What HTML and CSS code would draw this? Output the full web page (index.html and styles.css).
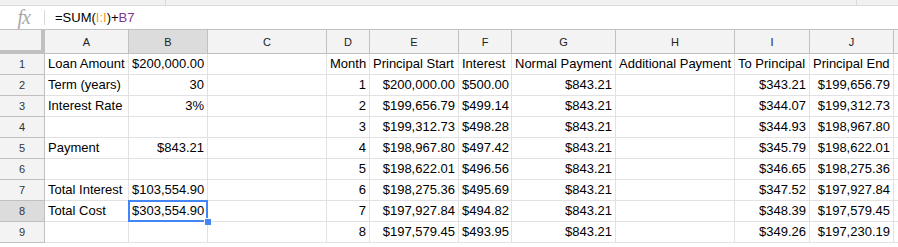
FILE: index.html
```html
<!DOCTYPE html>
<html lang="en">
<head>
 <meta charset="UTF-8">
 <meta name="viewport" content="width=device-width, initial-scale=1">
 <title>Mortgage Sheet</title>
 <link rel="stylesheet" href="styles.css">
</head>
<body>
 <div class="toolbar-edge">
  <span class="edge-part edge-left"></span>
  <span class="edge-part edge-mid"></span>
  <span class="edge-part"></span>
 </div>

 <div class="formula-bar">
  <div class="fx-box">
   <span class="fx">fx</span>
   <span class="fx-divider"></span>
  </div>
  <div class="formula">=SUM(<span class="ref-range">I:I</span>)+<span class="ref-cell">B7</span></div>
 </div>

 <table class="sheet">
  <colgroup>
   <col style="width: 45px">
   <col style="width: 84px">
   <col style="width: 79px">
   <col style="width: 119px">
   <col style="width: 43px">
   <col style="width: 89px">
   <col style="width: 53px">
   <col style="width: 104px">
   <col style="width: 119px">
   <col style="width: 75px">
   <col style="width: 84px">
   <col style="width: 4px">
  </colgroup>
  <thead>
   <tr>
    <th class="corner"></th>
    <th>A</th>
    <th class="active">B</th>
    <th>C</th>
    <th>D</th>
    <th>E</th>
    <th>F</th>
    <th>G</th>
    <th>H</th>
    <th>I</th>
    <th>J</th>
    <th class="edge"></th>
   </tr>
  </thead>
  <tbody id="sheetBody"></tbody>
 </table>

 <script>
  // Rows of the sheet: columns A to J, empty string for a blank cell
  const rows = [
   ['Loan Amount', '$200,000.00', '', 'Month', 'Principal Start', 'Interest', 'Normal Payment', 'Additional Payment', 'To Principal', 'Principal End'],
   ['Term (years)', '30', '', '1', '$200,000.00', '$500.00', '$843.21', '', '$343.21', '$199,656.79'],
   ['Interest Rate', '3%', '', '2', '$199,656.79', '$499.14', '$843.21', '', '$344.07', '$199,312.73'],
   ['', '', '', '3', '$199,312.73', '$498.28', '$843.21', '', '$344.93', '$198,967.80'],
   ['Payment', '$843.21', '', '4', '$198,967.80', '$497.42', '$843.21', '', '$345.79', '$198,622.01'],
   ['', '', '', '5', '$198,622.01', '$496.56', '$843.21', '', '$346.65', '$198,275.36'],
   ['Total Interest', '$103,554.90', '', '6', '$198,275.36', '$495.69', '$843.21', '', '$347.52', '$197,927.84'],
   ['Total Cost', '$303,554.90', '', '7', '$197,927.84', '$494.82', '$843.21', '', '$348.39', '$197,579.45'],
   ['', '', '', '8', '$197,579.45', '$493.95', '$843.21', '', '$349.26', '$197,230.19']
  ];

  const selectedRow = 7; // row 8
  const selectedCol = 1; // column B

  const body = document.getElementById('sheetBody');

  rows.forEach((row, r) => {
   const tr = document.createElement('tr');

   const rowHead = document.createElement('th');
   rowHead.className = 'row-head' + (r === selectedRow ? ' active' : '');
   rowHead.textContent = r + 1;
   tr.appendChild(rowHead);

   row.concat(['']).forEach((value, c) => {
    const td = document.createElement('td');
    td.textContent = value;
    // numbers and money go right, words stay left
    if (/^[\$\d]/.test(value)) td.className = 'num';
    if (r === selectedRow && c === selectedCol) td.classList.add('selected');
    tr.appendChild(td);
   });

   body.appendChild(tr);
  });
 </script>
</body>
</html>
```

FILE: styles.css
```css
:root {
 --header-bg: #f3f3f3;
 --header-active: #dcdcdc;
 --header-line: #c0c0c0;
 --grid-line: #e2e2e2;
 --select-blue: #4285f4;
 --text-color: #000000;
}

html,
body {
 margin: 0;
 padding: 0;
 overflow: hidden;
 background: #ffffff;
}

body {
 font-family: "Liberation Sans", Arial, sans-serif;
 font-size: 13px;
 color: var(--text-color);
 width: 898px;
 height: 247px;
}

/* Bottom edge of the toolbar above the formula bar */
.toolbar-edge {
 display: flex;
 height: 5px;
 background: #f1f1f1;
 border-bottom: 1px solid #dadada;
}

.edge-part {
 flex: 1;
}

.edge-left {
 flex: 0 0 165px;
 border-right: 1px solid #dadada;
}

.edge-mid {
 flex: 0 0 690px;
 border-right: 1px solid #dadada;
}

/* --- Formula bar --- */
.formula-bar {
 display: flex;
 align-items: center;
 height: 23px;
 border-bottom: 1px solid var(--header-line);
}

.fx-box {
 display: flex;
 align-items: center;
 justify-content: flex-end;
 width: 45px;
 height: 100%;
}

.fx {
 font-family: "Liberation Serif", "Times New Roman", serif;
 font-style: italic;
 font-size: 20px;
 color: #a8a8a8;
 margin-right: 14px;
 letter-spacing: -1px;
}

.fx-divider {
 width: 1px;
 height: 15px;
 background: #dadada;
}

.formula {
 padding-left: 10px;
 font-size: 13px;
 line-height: 23px;
}

.ref-range {
 color: #f29a2e;
}

.ref-cell {
 color: #7e3794;
}

/* --- Grid --- */
.sheet {
 table-layout: fixed;
 border-collapse: separate;
 border-spacing: 0;
 width: 898px;
}

.sheet th,
.sheet td {
 box-sizing: border-box;
 padding: 0 3px;
 white-space: nowrap;
 overflow: hidden;
}

.sheet thead th {
 height: 24px;
 background: var(--header-bg);
 border-right: 1px solid var(--header-line);
 border-bottom: 1px solid var(--header-line);
 font-size: 11px;
 font-weight: normal;
 color: #222222;
 text-align: center;
}

.sheet thead th.corner {
 border-right: 4px solid var(--header-line);
 border-bottom: 4px solid var(--header-line);
}

.sheet thead th.edge,
.sheet td:last-child {
 padding: 0;
 border-right: none;
}

.sheet .active {
 background: var(--header-active);
}

.sheet .row-head {
 height: 21px;
 background: var(--header-bg);
 border-right: 1px solid var(--header-line);
 border-bottom: 1px solid var(--header-line);
 font-size: 11px;
 font-weight: normal;
 color: #333333;
 text-align: center;
}

.sheet .row-head.active {
 background: var(--header-active);
}

.sheet td {
 height: 21px;
 border-right: 1px solid var(--grid-line);
 border-bottom: 1px solid var(--grid-line);
 text-align: left;
 line-height: 20px;
}

.sheet td.num {
 text-align: right;
}

/* Active cell outline with the fill handle */
.sheet td.selected {
 position: relative;
 overflow: visible;
}

.sheet td.selected::after {
 content: "";
 position: absolute;
 top: -1px;
 left: -1px;
 right: -1px;
 bottom: -1px;
 border: 2px solid var(--select-blue);
 pointer-events: none;
}

.sheet td.selected::before {
 content: "";
 position: absolute;
 right: -4px;
 bottom: -4px;
 width: 6px;
 height: 6px;
 background: var(--select-blue);
 border-top: 1px solid #ffffff;
 border-left: 1px solid #ffffff;
 z-index: 1;
}
```
